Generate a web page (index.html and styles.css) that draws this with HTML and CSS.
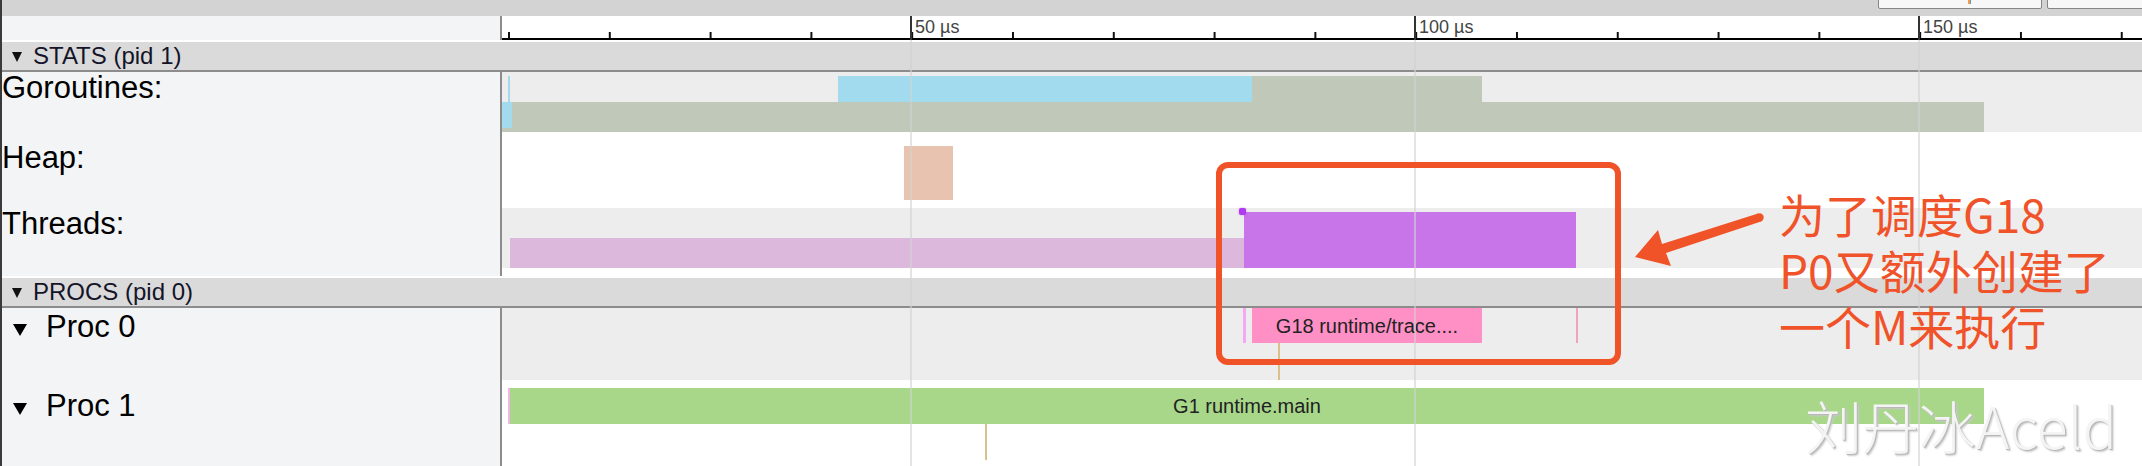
FILE: index.html
```html
<!DOCTYPE html>
<html>
<head>
<meta charset="utf-8">
<link rel="stylesheet" href="styles.css">
</head>
<body>
<div class="app">
  <div class="topbar">
    <div class="tb-btns">
      <div class="tb-btn first"><span class="tb-mark"></span></div>
      <div class="tb-btn second"></div>
    </div>
  </div>

  <div class="ruler">
    <div class="side"></div>
    <div class="axis">
      <div class="major" style="left:408px"><span>50 µs</span></div>
      <div class="major" style="left:912px"><span>100 µs</span></div>
      <div class="major" style="left:1416px"><span>150 µs</span></div>
    </div>
  </div>

  <div class="group"><span class="tri-s"></span><span>STATS (pid 1)</span></div>

  <div class="track t-gor">
    <div class="side"><div class="lbl">Goroutines:</div></div>
    <div class="canvas">
      <div class="band"></div>
      <div class="bar run-lo" style="left:0;width:1482px"></div>
      <div class="bar run-up" style="left:750px;width:230px"></div>
      <div class="bar rdy-up" style="left:336px;width:414px"></div>
      <div class="bar rdy-up" style="left:6px;width:2px"></div>
      <div class="bar rdy-lo" style="left:0;width:10px"></div>
    </div>
  </div>

  <div class="track t-heap">
    <div class="side"><div class="lbl">Heap:</div></div>
    <div class="canvas">
      <div class="bar heap" style="left:402px;width:49px"></div>
    </div>
  </div>

  <div class="track t-thr">
    <div class="side"><div class="lbl">Threads:</div></div>
    <div class="canvas">
      <div class="band"></div>
      <div class="bar thr-lo" style="left:8px;width:734px"></div>
      <div class="bar thr-up" style="left:742px;width:332px"></div>
      <div class="bar thr-dot" style="left:737px;width:7px"></div>
    </div>
  </div>

  <div class="group"><span class="tri-s"></span><span>PROCS (pid 0)</span></div>

  <div class="track t-p0">
    <div class="side"><div class="plbl"><span class="tri-p"></span><span>Proc 0</span></div></div>
    <div class="canvas gray">
      <div class="bar p0-slice thin-a" style="left:741px;width:3px"></div>
      <div class="bar p0-slice pink" style="left:750px;width:230px">G18 runtime/trace....</div>
      <div class="bar p0-slice thin-b" style="left:1074px;width:2px"></div>
      <div class="bar p0-flow" style="left:776px;width:2px"></div>
    </div>
  </div>

  <div class="track t-p1">
    <div class="side"><div class="plbl"><span class="tri-p"></span><span>Proc 1</span></div></div>
    <div class="canvas">
      <div class="bar p1-slice thin-c" style="left:6px;width:2px"></div>
      <div class="bar p1-slice green" style="left:8px;width:1474px">G1 runtime.main</div>
      <div class="bar p1-flow" style="left:483px;width:2px"></div>
    </div>
  </div>

  <div class="grid g50"></div>
  <div class="grid g100"></div>
  <div class="grid g150"></div>

  <div class="anno-box"></div>
  <svg class="anno-arrow" width="150" height="70" viewBox="0 0 150 70">
    <polygon points="10,52 33,25 37,39 133,8.5 136,16.5 41,48 46,61" fill="#f05327"/>
    <circle cx="134.5" cy="12.5" r="4.2" fill="#f05327"/>
  </svg>
  <div class="anno-text">
    <div class="anno-line">为了调度G18</div>
    <div class="anno-line">P0又额外创建了</div>
    <div class="anno-line">一个M来执行</div>
  </div>
  <div class="watermark">刘丹冰Aceld</div>
</div>
</body>
</html>
```

FILE: styles.css
```css
* { box-sizing: border-box; }
html, body { margin: 0; padding: 0; }
body {
  width: 2142px;
  height: 466px;
  overflow: hidden;
  background: #fff;
  font-family: "Liberation Sans", Arial, sans-serif;
}
.app {
  position: relative;
  height: 466px;
  border-left: 2px solid #3a3a3a;
  overflow: hidden;
}

/* top bar */
.topbar {
  height: 16px;
  background: #d3d3d3;
  display: flex;
  overflow: hidden;
}
.tb-btns {
  margin-left: auto;
  margin-right: -20px;
  margin-top: -19px;
  display: flex;
  gap: 5px;
  height: 28px;
}
.tb-btn {
  height: 28px;
  background: #f7f7f7;
  border: 1px solid #858585;
  border-radius: 2px;
}
.tb-btn.first { width: 164px; padding-left: 89px; }
.tb-btn.second { width: 115px; }
.tb-mark {
  display: block;
  width: 3px;
  height: 8px;
  margin-top: 14px;
  background: linear-gradient(to right, #f0a040 50%, #6a8fe0 50%);
}

/* ruler */
.ruler { display: flex; height: 24px; }
.side {
  width: 500px;
  flex: none;
  background: #f3f4f6;
  border-right: 2px solid #8c8c8c;
}
.axis {
  flex: 1;
  position: relative;
  background-color: #fff;
  border-bottom: 2px solid #000;
  background-image: linear-gradient(to right, #111 0 2px, transparent 2px);
  background-size: 100.8px 6px;
  background-repeat: repeat-x;
  background-position: 6px 16px;
}
.major {
  position: absolute;
  top: 0;
  bottom: -2px;
  width: 2px;
  background: #333;
}
.major span {
  position: absolute;
  left: 5px;
  top: 2px;
  font-size: 18px;
  line-height: 18px;
  color: #444;
  white-space: nowrap;
}

/* group headers */
.group {
  height: 32px;
  background: #dadada;
  border-top: 2px solid #fff;
  border-bottom: 2px solid #8c8c8c;
  display: flex;
  align-items: center;
  gap: 11px;
  padding-left: 10px;
  font-size: 24px;
  line-height: 24px;
  color: #141428;
}
.tri-s {
  width: 0;
  height: 0;
  border-left: 5px solid transparent;
  border-right: 5px solid transparent;
  border-top: 10px solid #111;
  margin-top: 2px;
}

/* tracks */
.track { display: flex; }
.t-gor { height: 70px; }
.t-heap { height: 66px; }
.t-thr { height: 68px; }
.t-p0 { height: 72px; }
.t-p1 { height: 86px; }
.lbl {
  font-size: 31px;
  line-height: 31px;
  color: #000;
  white-space: nowrap;
}
.plbl {
  display: flex;
  align-items: center;
  gap: 19px;
  padding-left: 11px;
  font-size: 31px;
  line-height: 31px;
  color: #000;
}
.t-p0 .plbl { padding-top: 3px; }
.t-p1 .plbl { padding-top: 10px; }
.tri-p {
  width: 0;
  height: 0;
  border-left: 7px solid transparent;
  border-right: 7px solid transparent;
  border-top: 12px solid #000;
  margin-top: 6px;
}
.canvas { flex: 1; position: relative; }
.canvas.gray { background: #ededed; }
.band { height: 60px; background: #ededed; }

.bar { position: absolute; }
.run-lo { top: 30px; height: 30px; background: #c0c8b9; }
.run-up { top: 4px; height: 26px; background: #c0c8b9; }
.rdy-up { top: 4px; height: 26px; background: #a1dbed; }
.rdy-lo { top: 30px; height: 26px; background: #a1dbed; }
.heap { top: 4px; height: 54px; background: #e8c4b0; }
.thr-lo { top: 30px; height: 30px; background: #dcb9dc; }
.thr-up { top: 4px; height: 56px; background: #c775e8; }
.thr-dot {
  top: 0;
  height: 7px;
  background: #b03af0;
  border-radius: 2px;
  box-shadow: 0 0 2px rgba(176, 58, 240, 0.6);
}

.p0-slice { top: 0; height: 35px; }
.p1-slice { top: 8px; height: 36px; }
.pink, .green {
  display: flex;
  align-items: center;
  justify-content: center;
  font-size: 20px;
  line-height: 20px;
  color: #222;
  white-space: nowrap;
  overflow: hidden;
}
.pink { background: #fe90c5; }
.green { background: #a8d78a; }
.thin-a { background: #f5a8f5; }
.thin-b { background: #f0a3b9; }
.thin-c { background: #f2b5e6; }
.p0-flow { top: 35px; height: 37px; background: #dcc08c; }
.p1-flow { top: 44px; height: 36px; background: #d8c08a; }

/* grid lines over the tracks */
.grid {
  position: absolute;
  top: 40px;
  bottom: 0;
  width: 2px;
  background: rgba(210, 210, 210, 0.6);
}
.g50 { left: 908px; }
.g100 { left: 1412px; }
.g150 { left: 1916px; }

/* annotation */
.anno-box {
  position: absolute;
  left: 1214px;
  top: 162px;
  width: 405px;
  height: 203px;
  border: 6px solid #f05327;
  border-radius: 12px;
}
.anno-arrow {
  position: absolute;
  left: 1623px;
  top: 205px;
}
.anno-text {
  position: absolute;
  left: 1777px;
  top: 185px;
  font-family: "Noto Sans CJK SC", sans-serif;
  font-size: 46px;
  color: #f0532a;
  white-space: nowrap;
}
.anno-line {
  height: 56px;
  line-height: 56px;
}
.watermark {
  position: absolute;
  left: 1803px;
  top: 396px;
  font-family: "Noto Sans CJK SC", sans-serif;
  font-weight: 300;
  font-size: 57px;
  line-height: 57px;
  color: #f4f4f4;
  white-space: nowrap;
  text-shadow: 1px 1px 0 #b8b8b8, 2px 2px 2px #c8c8c8;
}
```
